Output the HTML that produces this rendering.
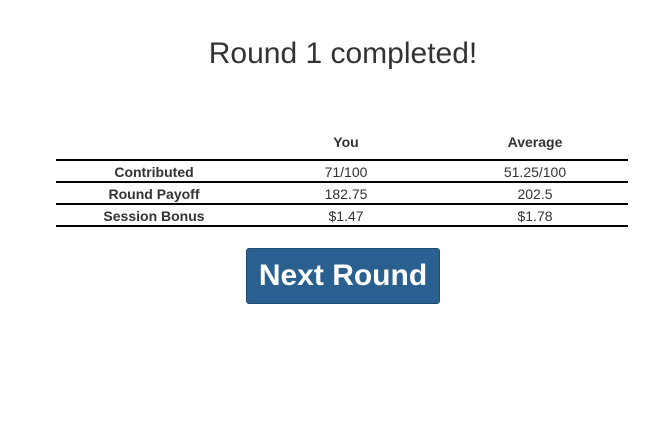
<!DOCTYPE html>
<html><head><style>
body{margin:0;width:672px;height:428px;background:#fff;font-family:"Liberation Sans",sans-serif;color:#333;position:relative}
.a{position:absolute;white-space:nowrap;transform:translateX(-50%)}
.l{position:absolute;left:56px;width:572px;height:2px;background:#000}
.b{font-weight:bold}
.t{font-size:14px}
</style></head><body>
<div class="a" style="left:343px;top:37px;font-size:30px;">Round 1 completed!</div>
<div class="a t b" style="left:346px;top:134px">You</div>
<div class="a t b" style="left:535px;top:134px">Average</div>
<div class="l" style="top:159px"></div>
<div class="a t b" style="left:154px;top:164px">Contributed</div>
<div class="a t" style="left:346px;top:164px">71/100</div>
<div class="a t" style="left:535px;top:164px">51.25/100</div>
<div class="l" style="top:181px"></div>
<div class="a t b" style="left:154px;top:186px">Round Payoff</div>
<div class="a t" style="left:346px;top:186px">182.75</div>
<div class="a t" style="left:535px;top:186px">202.5</div>
<div class="l" style="top:203px"></div>
<div class="a t b" style="left:154px;top:208px">Session Bonus</div>
<div class="a t" style="left:346px;top:208px">$1.47</div>
<div class="a t" style="left:535px;top:208px">$1.78</div>
<div class="l" style="top:225px"></div>
<div style="position:absolute;left:246px;top:248px;width:192px;height:54px;background:#2a6090;border:1px solid #204d74;border-radius:3px;color:#fff;font-weight:bold;font-size:30px;line-height:54px;text-align:center">Next Round</div>
</body></html>
